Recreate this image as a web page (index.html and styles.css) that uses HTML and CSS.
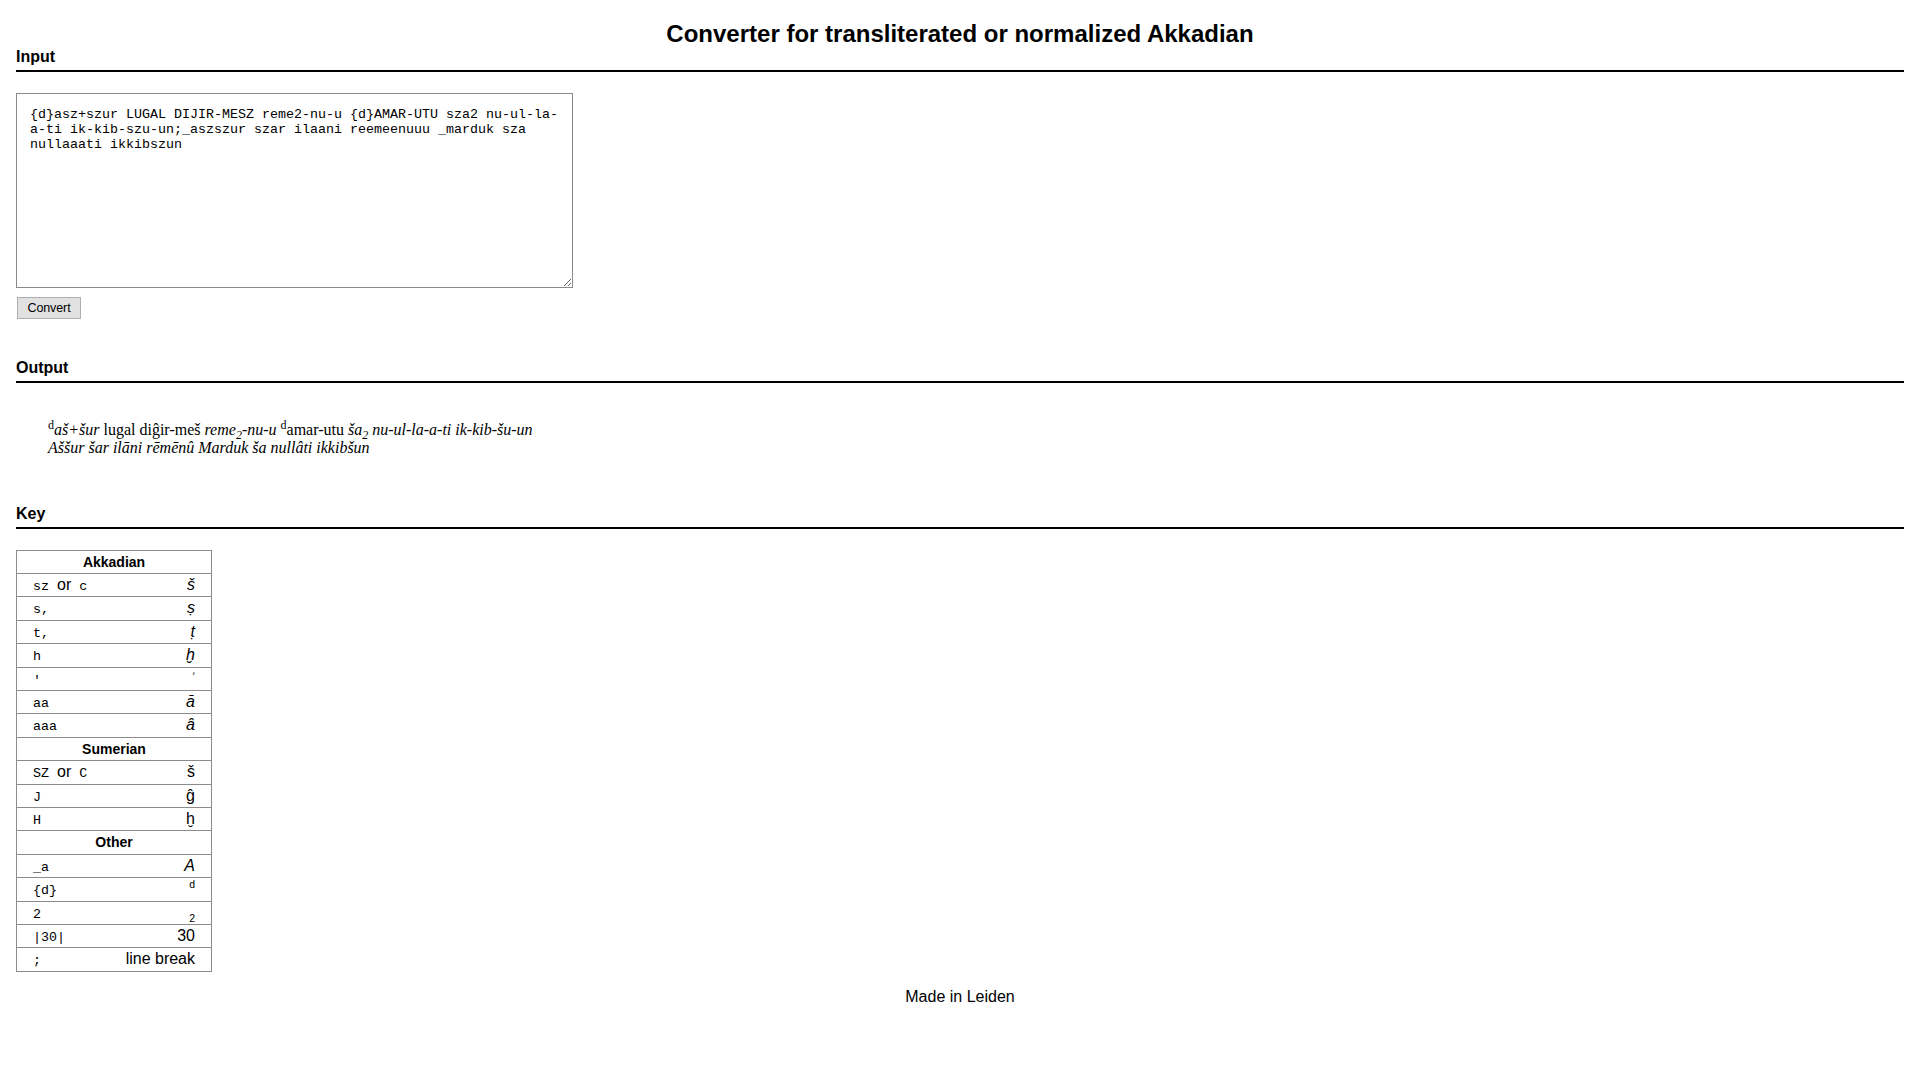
FILE: index.html
```html
<!DOCTYPE html>
<html lang="en">
<head>
<meta charset="utf-8">
<title>Converter for transliterated or normalized Akkadian</title>
<link rel="stylesheet" href="styles.css">
</head>
<body>
<div class="page">
  <h1 class="title">Converter for transliterated or normalized Akkadian</h1>

  <h2 class="section">Input</h2>
  <textarea class="input" spellcheck="false">{d}asz+szur LUGAL DIJIR-MESZ reme2-nu-u {d}AMAR-UTU sza2 nu-ul-la-a-ti ik-kib-szu-un;_aszszur szar ilaani reemeenuuu _marduk sza nullaaati ikkibszun</textarea>
  <button class="convert" type="button">Convert</button>

  <h2 class="section section-output">Output</h2>
  <div class="output"><sup>d</sup><i>aš+šur</i> lugal diĝir-meš <i>reme<sub>2</sub>-nu-u</i> <sup>d</sup>amar-utu <i>ša<sub>2</sub> nu-ul-la-a-ti ik-kib-šu-un</i><br><i>Aššur šar ilāni rēmēnû Marduk ša nullâti ikkibšun</i></div>

  <h2 class="section section-key">Key</h2>
  <table class="key">
    <tr><th colspan="2">Akkadian</th></tr>
    <tr><td><code>sz </code>or<code> c</code></td><td class="r"><i>š</i></td></tr>
    <tr><td><code>s,</code></td><td class="r"><i>ṣ</i></td></tr>
    <tr><td><code>t,</code></td><td class="r"><i>ṭ</i></td></tr>
    <tr><td><code>h</code></td><td class="r"><i>ḫ</i></td></tr>
    <tr><td><code>'</code></td><td class="r"><i>ʾ</i></td></tr>
    <tr><td><code>aa</code></td><td class="r"><i>ā</i></td></tr>
    <tr><td><code>aaa</code></td><td class="r"><i>â</i></td></tr>
    <tr><th colspan="2">Sumerian</th></tr>
    <tr><td><code>SZ </code>or<code> C</code></td><td class="r">š</td></tr>
    <tr><td><code>J</code></td><td class="r">ĝ</td></tr>
    <tr><td><code>H</code></td><td class="r">ḫ</td></tr>
    <tr><th colspan="2">Other</th></tr>
    <tr><td><code>_a</code></td><td class="r"><i>A</i></td></tr>
    <tr><td><code>{d}</code></td><td class="r"><sup>d</sup></td></tr>
    <tr><td><code>2</code></td><td class="r"><sub>2</sub></td></tr>
    <tr><td><code>|30|</code></td><td class="r">30</td></tr>
    <tr><td><code>;</code></td><td class="r">line break</td></tr>
  </table>

  <footer class="footer">Made in Leiden</footer>
</div>
</body>
</html>
```

FILE: styles.css
```css
html, body {
  margin: 0;
  padding: 0;
  background: #ffffff;
  color: #000000;
}

body {
  font-family: "Liberation Sans", Arial, sans-serif;
  font-size: 16px;
}

.page {
  padding: 0 16px;
}

.title {
  margin: 20px 0 0;
  font-size: 24px;
  line-height: 28px;
  font-weight: bold;
  text-align: center;
}

.section {
  margin: 0;
  font-size: 16px;
  line-height: 18px;
  font-weight: bold;
  padding-bottom: 4px;
  border-bottom: 2px solid #000000;
}

.input {
  display: block;
  box-sizing: border-box;
  width: 557px;
  height: 195px;
  margin: 21px 0 0;
  padding: 13px 4px 12px 13px;
  border: 1px solid #8a8a8a;
  font-family: "Liberation Mono", "Courier New", monospace;
  font-size: 13.333px;
  line-height: 15.2px;
  color: #000000;
  background: #ffffff;
  resize: both;
  outline: none;
}

.convert {
  display: block;
  box-sizing: border-box;
  margin: 9px 0 0 1px;
  width: 64px;
  height: 22px;
  padding: 0;
  border: 1px solid #adadad;
  background: #e1e1e1;
  color: #000000;
  font-family: "Liberation Sans", Arial, sans-serif;
  font-size: 12.5px;
  letter-spacing: -0.1px;
}

.section-output {
  margin-top: 39.5px;
}

.output {
  margin: 38.4px 0 0;
  padding-left: 32px;
  font-family: "Liberation Serif", "Times New Roman", serif;
  font-size: 16px;
  line-height: 18.4px;
}

.output sup,
.output sub {
  font-size: 12px;
  line-height: 0;
}

.section-key {
  margin-top: 47.3px;
}

.key {
  margin-top: 20.5px;
  border-collapse: collapse;
  border: 1px solid #8c8c8c;
  width: 196px;
  font-size: 16px;
  line-height: 18.4px;
}

.key tr {
  border-top: 1px solid #8c8c8c;
}

.key th,
.key td {
  height: 18.4px;
  padding: 2px 16px;
  line-height: 18.4px;
}

.key th {
  font-size: 14px;
  font-weight: bold;
  text-align: center;
}

.key td {
  text-align: left;
  white-space: nowrap;
}

.key td.r {
  text-align: right;
}

.key code {
  font-family: "Liberation Mono", "Courier New", monospace;
  font-size: 13.333px;
  line-height: 1;
  white-space: pre;
}

.key sup,
.key sub {
  font-size: 10.5px;
  line-height: 0;
}

.footer {
  margin-top: 16px;
  text-align: center;
  font-size: 16px;
  line-height: 18.4px;
}
```
